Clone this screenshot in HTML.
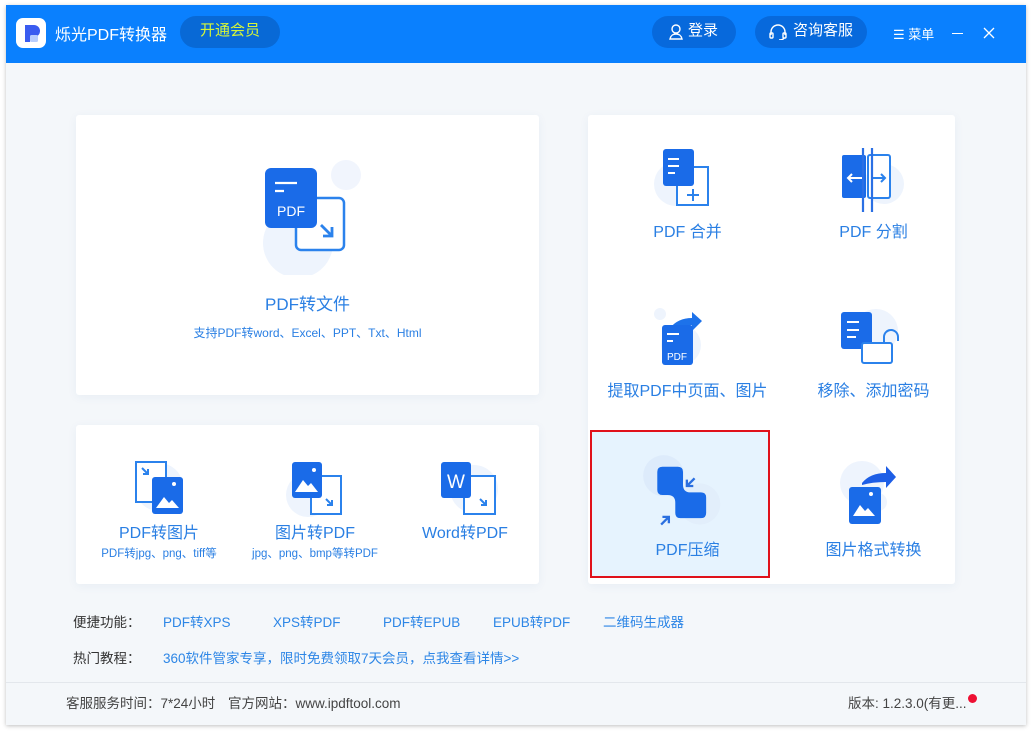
<!DOCTYPE html>
<html><head><meta charset="utf-8"><style>
*{margin:0;padding:0;box-sizing:border-box}
body{width:1032px;height:733px;background:#fff;font-family:"Liberation Sans","Noto Sans CJK SC",sans-serif;position:relative;overflow:hidden}
.win{position:absolute;left:6px;top:5px;width:1020px;height:720px;background:#f4f7fa;box-shadow:0 1px 4px rgba(0,0,0,.25)}
.hdr{position:absolute;left:0;top:0;width:1020px;height:58px;background:#0a80fe}
.a{position:absolute}
.pill{position:absolute;height:32px;border-radius:16px;background:#0769dc;color:#fff;font-size:15px;line-height:30px;text-align:center}
.card{position:absolute;background:#fff;border-radius:3px;box-shadow:0 2px 10px rgba(40,90,160,.06)}
.t{position:absolute;color:#2a7fe3;font-size:16px;text-align:center;white-space:nowrap}
.s{position:absolute;color:#2a7fe3;font-size:11.5px;text-align:center;white-space:nowrap}
.lk{position:absolute;color:#2d86e6;font-size:13.5px;white-space:nowrap}
.dk{position:absolute;color:#333;font-size:13.5px;white-space:nowrap}
</style></head><body>
<div class="win">
<div class="hdr">
 <div class="a" style="left:10px;top:13px;width:30px;height:30px;background:#fff;border-radius:7px"></div>
 <svg class="a" style="left:10px;top:13px" width="30" height="30"><path d="M9 7h9a6 6 0 0 1 0 12h-4v5h-5z" fill="#3a5cf0"/><rect x="14" y="17" width="8" height="7" rx="1.5" fill="#b8cdfd"/></svg>
 <div class="a" style="left:49px;top:16px;color:#fff;font-size:16px">烁光PDF转换器</div>
 <div class="pill" style="left:174px;top:11px;width:100px;color:#d4f53a;background:#0869d6">开通会员</div>
 <div class="pill" style="left:646px;top:11px;width:84px;padding-left:18px">登录</div>
 <svg class="a" style="left:663px;top:19px" width="14" height="16" fill="none" stroke="#fff" stroke-width="1.4"><circle cx="7" cy="5" r="4"/><path d="M1 15c1-4 3-5 6-5s5 1 6 5z"/></svg>
 <div class="pill" style="left:749px;top:11px;width:112px;padding-left:24px">咨询客服</div>
 <svg class="a" style="left:763px;top:19px" width="18" height="16" fill="none" stroke="#fff" stroke-width="1.4"><path d="M2 11V8a7 7 0 0 1 14 0v3"/><rect x="1" y="9" width="3" height="5" rx="1"/><rect x="14" y="9" width="3" height="5" rx="1"/><path d="M15 14q-1 2-5 2"/></svg>
 <div class="a" style="left:887px;top:19px;color:#fff;font-size:13px">☰ 菜单</div>
 <div class="a" style="left:946px;top:28px;width:11px;height:1px;background:#fff"></div>
 <svg class="a" style="left:977px;top:22px" width="12" height="12" stroke="#fff" stroke-width="1.3"><path d="M1 1l10 10M11 1L1 11"/></svg>
</div>

<div class="card" style="left:70px;top:110px;width:463px;height:280px"></div>
<svg class="a" style="left:244px;top:150px" width="120" height="120">
 <circle cx="48" cy="88" r="35" fill="#eef4fd"/><circle cx="96" cy="20" r="15" fill="#f1f5fd"/>
 <rect x="46" y="43" width="48" height="52" rx="5" fill="#fff" stroke="#2b82ec" stroke-width="2.5"/>
 <path d="M71 70l11 11M82 72v9h-9" stroke="#2b82ec" stroke-width="2.8" fill="none"/>
 <rect x="15" y="13" width="52" height="60" rx="6" fill="#1a6be8"/>
 <path d="M25 28h22M25 36h9" stroke="#fff" stroke-width="2.2"/>
 <text x="41" y="61" fill="#fff" font-size="14" font-family="Liberation Sans" text-anchor="middle">PDF</text>
</svg>
<div class="t" style="left:70px;top:285px;width:463px;font-size:17px">PDF转文件</div>
<div class="s" style="left:70px;top:319px;width:463px;font-size:12px">支持PDF转word、Excel、PPT、Txt、Html</div>

<div class="card" style="left:70px;top:420px;width:463px;height:159px"></div>
<svg class="a" style="left:118px;top:452px" width="70" height="60">
 <circle cx="35" cy="30" r="24" fill="#eef4fd"/>
 <rect x="12" y="5" width="30" height="40" fill="#fff" stroke="#2b82ec" stroke-width="2"/>
 <path d="M18 11l6 6M24 12v5h-5" stroke="#2b82ec" stroke-width="2" fill="none"/>
 <rect x="28" y="20" width="31" height="37" rx="3" fill="#1a6be8"/>
 <path d="M32 51l8-11 5 6 3-3 7 8z" fill="#fff"/><circle cx="50" cy="27" r="2" fill="#fff"/>
</svg>
<div class="t" style="left:78px;top:514px;width:150px">PDF转图片</div>
<div class="s" style="left:78px;top:540px;width:150px">PDF转jpg、png、tiff等</div>
<svg class="a" style="left:274px;top:452px" width="70" height="60">
 <circle cx="28" cy="38" r="22" fill="#eef4fd"/>
 <rect x="31" y="19" width="30" height="38" fill="#fff" stroke="#2b82ec" stroke-width="2"/>
 <path d="M46 42l6 6M52 43v5h-5" stroke="#2b82ec" stroke-width="2" fill="none"/>
 <rect x="12" y="5" width="30" height="36" rx="3" fill="#1a6be8"/>
 <path d="M15 35l8-12 5 6 3-3 7 9z" fill="#fff"/><circle cx="34" cy="13" r="2" fill="#fff"/>
</svg>
<div class="t" style="left:234px;top:514px;width:150px">图片转PDF</div>
<div class="s" style="left:224px;top:540px;width:170px">jpg、png、bmp等转PDF</div>
<svg class="a" style="left:430px;top:452px" width="70" height="60">
 <circle cx="38" cy="32" r="24" fill="#eef4fd"/>
 <rect x="28" y="19" width="31" height="38" fill="#fff" stroke="#2b82ec" stroke-width="2"/>
 <path d="M44 42l6 6M50 43v5h-5" stroke="#2b82ec" stroke-width="2" fill="none"/>
 <rect x="5" y="5" width="30" height="36" rx="3" fill="#1a6be8"/>
 <text x="20" y="31" fill="#fff" font-size="19" font-family="Liberation Sans" text-anchor="middle">W</text>
</svg>
<div class="t" style="left:384px;top:514px;width:150px">Word转PDF</div>

<div class="card" style="left:582px;top:110px;width:367px;height:469px"></div>
<div class="a" style="left:584px;top:425px;width:180px;height:148px;background:#e6f3fe;border:2px solid #e0101a"></div>
<svg class="a" style="left:640px;top:139px" width="80" height="70">
 <circle cx="30" cy="40" r="22" fill="#eef4fd"/>
 <rect x="31" y="23" width="31" height="38" fill="#fff" stroke="#2b82ec" stroke-width="2"/>
 <path d="M47 45v12M41 51h12" stroke="#2b82ec" stroke-width="2"/>
 <rect x="17" y="5" width="31" height="37" rx="3" fill="#1a6be8"/>
 <path d="M22 15h11M22 22h11M22 29h7" stroke="#fff" stroke-width="2"/>
</svg>
<div class="t" style="left:594px;top:213px;width:175px">PDF 合并</div>
<svg class="a" style="left:826px;top:139px" width="80" height="70">
 <circle cx="52" cy="40" r="20" fill="#eef4fd"/>
 <rect x="10" y="11" width="24" height="43" rx="2" fill="#1a6be8"/>
 <rect x="36" y="11" width="22" height="43" rx="2" fill="#fff" stroke="#2b82ec" stroke-width="2"/>
 <path d="M31 4v64M40 4v64" stroke="#2b70e4" stroke-width="2.2"/>
 <path d="M16 34h14M20 30l-4 4 4 4" stroke="#fff" stroke-width="2" fill="none"/>
 <path d="M41 34h12M49 30l4 4-4 4" stroke="#2b82ec" stroke-width="2" fill="none"/>
</svg>
<div class="t" style="left:780px;top:213px;width:175px">PDF 分割</div>
<svg class="a" style="left:640px;top:298px" width="80" height="70">
 <circle cx="14" cy="11" r="6" fill="#eef4fd"/><circle cx="35" cy="42" r="20" fill="#eef4fd"/>
 <path d="M24 25q8-10 22-10v-6l10 9-10 10v-6q-12 0-22 3z" fill="#1d72ea"/>
 <rect x="16" y="22" width="31" height="40" rx="3" fill="#1a6be8"/>
 <path d="M21 31h12M21 38h6" stroke="#fff" stroke-width="2"/>
 <text x="31" y="57" fill="#fff" font-size="10" font-family="Liberation Sans" text-anchor="middle">PDF</text>
</svg>
<div class="t" style="left:594px;top:372px;width:175px">提取PDF中页面、图片</div>
<svg class="a" style="left:826px;top:298px" width="80" height="70">
 <circle cx="44" cy="28" r="22" fill="#eef4fd"/>
 <rect x="9" y="9" width="31" height="37" rx="3" fill="#1a6be8"/>
 <path d="M15 19h12M15 27h12M15 34h9" stroke="#fff" stroke-width="2"/>
 <rect x="30" y="40" width="30" height="20" rx="2" fill="#fff" stroke="#2b82ec" stroke-width="2"/>
 <path d="M52 40v-6a7 7 0 0 1 14 0v4" stroke="#2b82ec" stroke-width="2" fill="none"/>
</svg>
<div class="t" style="left:780px;top:372px;width:175px">移除、添加密码</div>
<svg class="a" style="left:632px;top:450px" width="90" height="80" viewBox="0 0 70 62">
 <circle cx="20" cy="16" r="16" fill="#ddebfb"/><circle cx="48" cy="38" r="16" fill="#e2eefb"/>
 <path d="M15 13q0-4 4-4h12q4 0 4 4v10q0 6 6 6h8q4 0 4 4v12q0 4-4 4h-16q-4 0-4-4v-8q0-6-6-6h-4q-4 0-4-4z" fill="#1a6be8"/>
 <path d="M44 18l-6 6M38 19v5h5" stroke="#2b6fe0" stroke-width="1.8" fill="none"/>
 <path d="M18 54l6-6M24 53v-5h-5" stroke="#2b6fe0" stroke-width="1.8" fill="none"/>
</svg>
<div class="t" style="left:594px;top:531px;width:175px">PDF压缩</div>
<svg class="a" style="left:826px;top:456px" width="80" height="70">
 <circle cx="30" cy="22" r="22" fill="#eef4fd"/><circle cx="46" cy="41" r="9" fill="#eef4fd"/>
 <path d="M30 22q8-10 24-10v-7l10 11-10 11v-6q-14 0-24 3z" fill="#1d5ee6"/>
 <rect x="17" y="26" width="32" height="37" rx="3" fill="#1a6be8"/>
 <path d="M21 55l7-11 5 6 3-3 7 8z" fill="#fff"/><circle cx="39" cy="33" r="2" fill="#fff"/>
</svg>
<div class="t" style="left:780px;top:531px;width:175px">图片格式转换</div>

<div class="dk" style="left:67px;top:606px">便捷功能：</div>
<div class="lk" style="left:157px;top:606px">PDF转XPS</div>
<div class="lk" style="left:267px;top:606px">XPS转PDF</div>
<div class="lk" style="left:377px;top:606px">PDF转EPUB</div>
<div class="lk" style="left:487px;top:606px">EPUB转PDF</div>
<div class="lk" style="left:597px;top:606px">二维码生成器</div>
<div class="dk" style="left:67px;top:642px">热门教程：</div>
<div class="lk" style="left:157px;top:642px">360软件管家专享，限时免费领取7天会员，点我查看详情&gt;&gt;</div>

<div class="a" style="left:0;top:677px;width:1020px;height:1px;background:#e3e7ec"></div>
<div class="dk" style="left:60px;top:687px;color:#444">客服服务时间：7*24小时</div>
<div class="dk" style="left:222px;top:687px;color:#444">官方网站：www.ipdftool.com</div>
<div class="dk" style="left:842px;top:687px;color:#444">版本: 1.2.3.0(有更...</div>
<div class="a" style="left:962px;top:689px;width:9px;height:9px;border-radius:50%;background:#ee1033"></div>
</div>
</body></html>
